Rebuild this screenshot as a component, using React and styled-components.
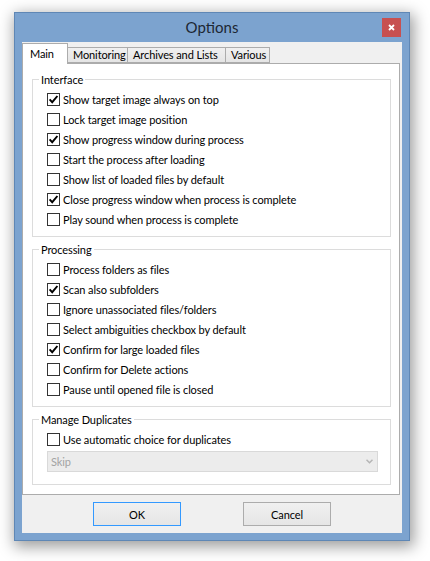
import styled, { createGlobalStyle } from "styled-components";

const GlobalStyle = createGlobalStyle`
  body {
    margin: 0;
    background: #ffffff;
    font-family: "Lato", "Liberation Sans", sans-serif;
    font-size: 11px;
    letter-spacing: -0.1px;
    color: #000;
  }
`;

const Page = styled.div`
  padding: 12px 0 20px 14px;
`;

const Window = styled.div`
  box-sizing: border-box;
  width: 396px;
  border: 1px solid #5f87b5;
  background: #7ca3cf;
  padding: 0 7px 7px;
  display: flex;
  flex-direction: column;
  box-shadow: 2px 4px 14px 2px rgba(0, 0, 0, 0.38);
`;

const TitleBar = styled.div`
  height: 29px;
  display: grid;
  grid-template-columns: 1fr auto 1fr;
`;

const Title = styled.div`
  grid-column: 2;
  font-size: 15px;
  letter-spacing: 0;
  line-height: 29px;
  color: #1d2733;
`;

const CloseButton = styled.div`
  grid-column: 3;
  justify-self: end;
  align-self: start;
  margin: 5px 1px 0 0;
  width: 19px;
  height: 19px;
  background: #c75050;
  display: flex;
  align-items: center;
  justify-content: center;
`;

const Client = styled.div`
  background: #f0f0f0;
  padding-top: 1px;
  display: flex;
  flex-direction: column;
`;

const TabStrip = styled.div`
  display: flex;
  align-items: flex-end;
  height: 20px;
`;

const Tab = styled.div`
  position: relative;
  box-sizing: border-box;
  width: ${(p) => p.$w}px;
  margin-left: ${(p) => (p.$first ? 0 : -1)}px;
  border: 1px solid #acacac;
  white-space: nowrap;
  ${(p) =>
    p.$active
      ? `
    z-index: 2;
    height: 21px;
    margin-bottom: -1px;
    border-bottom: none;
    background: #ffffff;
    padding: 2px 0 0 7px;
    line-height: 16px;
  `
      : `
    z-index: 1;
    height: 16px;
    background: linear-gradient(#f0f0f0, #e5e5e5);
    padding: 0 0 0 5px;
    line-height: 14px;
  `}
`;

const Panel = styled.div`
  background: #ffffff;
  border: 1px solid #acacac;
  margin-right: 2px;
  padding: 8px 8px 9px 9px;
  display: flex;
  flex-direction: column;
  gap: 5px;
`;

const Group = styled.fieldset`
  margin: 0;
  border: 1px solid #dcdcdc;
  padding: 2px 7px ${(p) => p.$bottom}px 6px;
  min-width: 0;
`;

const GroupTitle = styled.legend`
  padding: 0 2px;
  line-height: 15px;
`;

const Row = styled.label`
  display: flex;
  align-items: center;
  height: 20px;
  padding-left: 8px;
  gap: 3px;
  white-space: nowrap;
`;

const Box = styled.span`
  box-sizing: border-box;
  width: 13px;
  height: 13px;
  border: 1px solid #333333;
  background: #ffffff;
  display: flex;
  align-items: center;
  justify-content: center;
`;

const Select = styled.div`
  box-sizing: border-box;
  height: 21px;
  margin: 2px 5px 0 8px;
  border: 1px solid #d9d9d9;
  background: #ececec;
  color: #a3a3a3;
  padding: 0 4px 0 3px;
  display: flex;
  align-items: center;
  justify-content: space-between;
`;

const ButtonRow = styled.div`
  display: flex;
  justify-content: center;
  gap: 62px;
  padding: 7px 0;
`;

const Button = styled.div`
  box-sizing: border-box;
  width: 88px;
  height: 24px;
  border: 1px solid ${(p) => (p.$default ? "#3399ff" : "#acacac")};
  background: linear-gradient(#f0f0f0, #e5e5e5);
  display: flex;
  align-items: center;
  justify-content: center;
`;

const CheckBox = ({ checked }) => (
  <Box>
    {checked && (
      <svg width="11" height="11" viewBox="0 0 11 11">
        <path d="M1.6 5.4 L4.2 8.2 L9.4 2" fill="none" stroke="#000" strokeWidth="1.9" />
      </svg>
    )}
  </Box>
);

const Option = ({ label, checked }) => (
  <Row>
    <CheckBox checked={checked} />
    <span>{label}</span>
  </Row>
);

const interfaceOptions = [
  ["Show target image always on top", true],
  ["Lock target image position", false],
  ["Show progress window during process", true],
  ["Start the process after loading", false],
  ["Show list of loaded files by default", false],
  ["Close progress window when process is complete", true],
  ["Play sound when process is complete", false],
];

const processingOptions = [
  ["Process folders as files", false],
  ["Scan also subfolders", true],
  ["Ignore unassociated files/folders", false],
  ["Select ambiguities checkbox by default", false],
  ["Confirm for large loaded files", true],
  ["Confirm for Delete actions", false],
  ["Pause until opened file is closed", false],
];

const tabs = [
  ["Main", 46],
  ["Monitoring", 61],
  ["Archives and Lists", 99],
  ["Various", 45],
];

export default function App() {
  return (
    <Page>
      <GlobalStyle />
      <Window>
        <TitleBar>
          <Title>Options</Title>
          <CloseButton>
            <svg width="7" height="7" viewBox="0 0 7 7">
              <path d="M1 1 L6 6 M6 1 L1 6" stroke="#fff" strokeWidth="1.8" />
            </svg>
          </CloseButton>
        </TitleBar>
        <Client>
          <TabStrip>
            {tabs.map(([name, w], i) => (
              <Tab key={name} $w={w} $first={i === 0} $active={i === 0}>
                {name}
              </Tab>
            ))}
          </TabStrip>
          <Panel>
            <Group $bottom={7}>
              <GroupTitle>Interface</GroupTitle>
              {interfaceOptions.map(([label, checked]) => (
                <Option key={label} label={label} checked={checked} />
              ))}
            </Group>
            <Group $bottom={7}>
              <GroupTitle>Processing</GroupTitle>
              {processingOptions.map(([label, checked]) => (
                <Option key={label} label={label} checked={checked} />
              ))}
            </Group>
            <Group $bottom={12}>
              <GroupTitle>Manage Duplicates</GroupTitle>
              <Option label="Use automatic choice for duplicates" checked={false} />
              <Select>
                <span>Skip</span>
                <svg width="7" height="5" viewBox="0 0 7 5">
                  <path d="M0.5 0.8 L3.5 3.8 L6.5 0.8" fill="none" stroke="#b5b5b5" strokeWidth="1.5" />
                </svg>
              </Select>
            </Group>
          </Panel>
          <ButtonRow>
            <Button $default>OK</Button>
            <Button>Cancel</Button>
          </ButtonRow>
        </Client>
      </Window>
    </Page>
  );
}
